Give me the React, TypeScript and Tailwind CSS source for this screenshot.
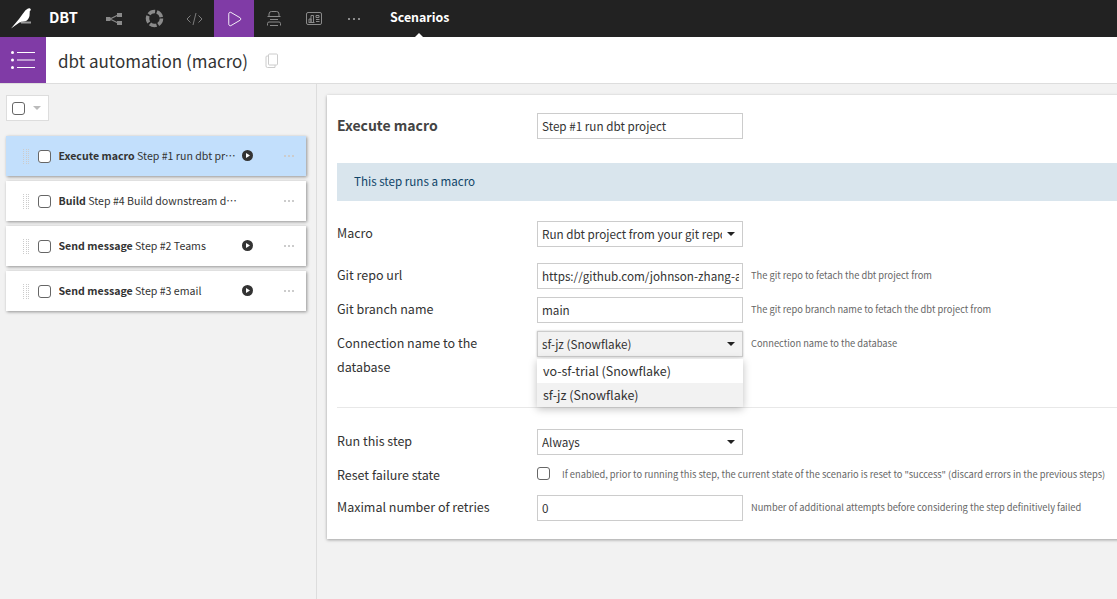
import { Play } from "lucide-react";

const font = "[font-family:'Noto_Sans_CJK_SC','Noto_Sans',sans-serif]";

function TopIcon({ children, active }: { children: React.ReactNode; active?: boolean }) {
  return (
    <div className={`flex h-[37px] w-10 items-center justify-center ${active ? "bg-[#803ba6]" : ""}`}>
      {children}
    </div>
  );
}

function Caret() {
  return <span className="block h-0 w-0 border-x-[4px] border-t-[4px] border-x-transparent border-t-[#222]" />;
}

const steps = [
  { type: "Execute macro", name: "Step #1 run dbt project", play: true, active: true },
  { type: "Build", name: "Step #4 Build downstream datasets", play: false },
  { type: "Send message", name: "Step #2 Teams", play: true },
  { type: "Send message", name: "Step #3 email", play: true },
];

function StepRow({ step }: { step: (typeof steps)[number] }) {
  return (
    <div
      className={`flex h-10 w-[300px] items-center shadow-[1px_1px_3px_rgba(0,0,0,0.4)] ${
        step.active ? "bg-[#c2dffc]" : "bg-white"
      }`}
    >
      <div className="ml-[17px] grid w-[6px] grid-cols-3 gap-x-[1.5px] gap-y-px">
        {Array.from({ length: 24 }).map((_, i) => (
          <span key={i} className="h-px w-px bg-[#ccc]" />
        ))}
      </div>
      <span className="ml-[9px] h-[13px] w-[13px] shrink-0 rounded-[3px] border border-[#666] bg-white" />
      <div className="ml-[7.5px] w-[183px] truncate text-[10.6px] leading-[16px] text-[#333]">
        <b className="font-bold">{step.type}</b> {step.name}
      </div>
      <div className="flex w-[12px] shrink-0 justify-center">
        {step.play && (
          <svg width="11" height="11" viewBox="0 0 11 11" className="-mt-px">
            <circle cx="5.5" cy="5.5" r="5.5" fill="#333" />
            <path d="M4 3l4 2.5L4 8z" fill="#fff" />
          </svg>
        )}
      </div>
      <div className="ml-[30px] flex gap-[2px]">
        <span className="h-[2px] w-[2px] bg-[#ccc]" />
        <span className="h-[2px] w-[2px] bg-[#ccc]" />
        <span className="h-[2px] w-[2px] bg-[#ccc]" />
      </div>
    </div>
  );
}

function Field({
  label,
  help,
  helpClass = "ml-2 pt-1",
  children,
  className = "",
}: {
  label: React.ReactNode;
  help?: string;
  helpClass?: string;
  children?: React.ReactNode;
  className?: string;
}) {
  return (
    <div className={`flex ${className}`}>
      <div className="w-[200px] shrink-0 text-[12.5px] leading-[24px] text-[#333]">{label}</div>
      {children}
      {help && <div className={`whitespace-nowrap text-[9.3px] leading-[16px] text-[#666] ${helpClass}`}>{help}</div>}
    </div>
  );
}

function Box({ children, select, className = "" }: { children?: React.ReactNode; select?: boolean; className?: string }) {
  return (
    <div
      className={`flex h-[26px] w-[206px] shrink-0 items-center justify-between border border-[#ccc] pl-1 text-[11.7px] leading-[24px] whitespace-nowrap text-[#333] ${
        select ? "pr-[7px]" : "pr-[3px]"
      } ${className}`}
    >
      <span className="block min-w-0 flex-1 overflow-hidden">{children}</span>
      {select && (
        <span className="ml-[5px] block shrink-0">
          <Caret />
        </span>
      )}
    </div>
  );
}

export default function App() {
  return (
    <div className={`flex h-[599px] w-[1117px] flex-col overflow-hidden bg-[#f2f2f2] ${font}`}>
      <header className="flex h-[37px] shrink-0 items-center bg-[#222]">
        <div className="flex w-[46px] justify-center">
          <svg width="22" height="22" viewBox="0 0 22 22" className="-ml-[4px] mt-[-1px]">
            <path d="M1 21.5 L9 12 L13 6.5 Q15.5 2.5 18 1.5 L20 1.2 L21 3 L19.8 4 L19.5 9 Q18.5 13 15.5 14.2 L9.5 15.5 Z" fill="#fff" />
            <rect x="11" y="14.5" width="10" height="2" fill="#999" />
          </svg>
        </div>
        <div className="w-[48px] pb-[3px] pl-[3px] text-[14.5px] leading-none font-bold text-white">DBT</div>
        <TopIcon>
          <svg width="16" height="12" viewBox="0 0 16 12" fill="#8a8a8a">
            <rect x="0" y="4" width="4.5" height="4" />
            <rect x="11" y="0" width="5" height="4" />
            <rect x="11" y="8" width="5" height="4" />
            <path d="M4 6 L12 2 M4 6 L12 10" stroke="#8a8a8a" strokeWidth="1.2" fill="none" />
          </svg>
        </TopIcon>
        <TopIcon>
          <svg width="19" height="19" viewBox="0 0 19 19" fill="none">
            <circle cx="9.5" cy="9.5" r="7" stroke="#8a8a8a" strokeWidth="3.5" strokeDasharray="7 1.8" />
          </svg>
        </TopIcon>
        <TopIcon>
          <svg width="17" height="14" viewBox="0 0 17 14" fill="none" stroke="#7d7d7d" strokeWidth="1">
            <path d="M4.5 3.5 L1 7 L4.5 10.5 M12.5 3.5 L16 7 L12.5 10.5 M10 1 L7 13" />
          </svg>
        </TopIcon>
        <TopIcon active>
          <Play size={18} strokeWidth={1.2} color="#fff" />
        </TopIcon>
        <TopIcon>
          <svg width="14" height="15" viewBox="0 0 14 15" fill="none" stroke="#8a8a8a" strokeWidth="1">
            <path d="M2 5 V3 Q2 0.5 4.5 0.5 H9.5 Q12 0.5 12 3 V5 M0.5 5.5 H13.5 M3 8.5 H11 M0.5 14.5 V12.5 Q0.5 11 2 11 H12 Q13.5 11 13.5 12.5 V14.5 M3 14.5 H11" />
          </svg>
        </TopIcon>
        <TopIcon>
          <svg width="16" height="13" viewBox="0 0 16 13" fill="none" stroke="#8a8a8a" strokeWidth="1">
            <rect x="0.5" y="0.5" width="15" height="12" rx="1.5" />
            <path d="M3 10 V7 H5 V10 M5 10 V3.5 H7.5 V10 M2.5 10.5 H8.5 M10 3.5 H13 V5.5 H10Z M10 7.5 H13.5 M10 9.5 H13.5" />
          </svg>
        </TopIcon>
        <TopIcon>
          <div className="flex gap-[3px]">
            <span className="h-[2px] w-[2px] bg-[#8a8a8a]" />
            <span className="h-[2px] w-[2px] bg-[#8a8a8a]" />
            <span className="h-[2px] w-[2px] bg-[#8a8a8a]" />
          </div>
        </TopIcon>
        <div className="relative ml-4 flex h-[37px] items-center pb-[3px] text-[12.4px] leading-none font-bold text-white">
          Scenarios
          <span className="absolute bottom-0 left-[25px] h-0 w-0 border-x-[4px] border-b-[4px] border-x-transparent border-b-white" />
        </div>
      </header>

      <div className="flex h-[47px] shrink-0 items-center border-b border-[#ddd] bg-white">
        <div className="flex h-full w-[46px] items-center justify-center bg-[#803ba6]">
          <svg width="24" height="18" viewBox="0 0 24 18" fill="#fff">
            <circle cx="1.5" cy="1.5" r="1.5" />
            <circle cx="1.5" cy="9" r="1.5" />
            <circle cx="1.5" cy="16.5" r="1.5" />
            <rect x="6" y="1" width="18" height="1" />
            <rect x="6" y="8.5" width="18" height="1" />
            <rect x="6" y="16" width="18" height="1" />
          </svg>
        </div>
        <h1 className="ml-3 pt-[2px] text-[17px] leading-[28px] font-normal text-[#333]">dbt automation (macro)</h1>
        <svg width="14" height="16" viewBox="0 0 14 16" fill="none" stroke="#ccc" className="ml-[17px] mt-px">
          <rect x="3.5" y="1" width="9" height="11" rx="1" />
          <path d="M3.5 3 H2 Q1 3 1 4 V13 Q1 14.5 2.5 14.5 H10 V12" />
        </svg>
      </div>

      <div className="flex min-h-0 flex-1">
        <aside className="w-[317px] shrink-0 border-r border-[#ddd] pl-[6px]">
          <div className="mt-[11px] flex h-[26px] w-[43px] items-center border border-[#ddd] bg-white pl-[5px]">
            <span className="h-[13px] w-[13px] rounded-[3px] border border-[#666] bg-white" />
            <span className="ml-[8px] h-0 w-0 border-x-[4px] border-t-[4px] border-x-transparent border-t-[#bbb]" />
          </div>
          <div className="mt-[15px] flex flex-col gap-[5px]">
            {steps.map((s) => (
              <StepRow key={s.name} step={s} />
            ))}
          </div>
        </aside>

        <main className="min-w-0 flex-1 pl-[10px] pt-[11px]">
          <div className="h-[444px] w-[900px] bg-white pl-[10px] pt-[18px] shadow-[0_1px_3px_rgba(0,0,0,0.35)]">
            <div className="flex items-start">
              <div className="w-[200px] text-[14px] leading-[24px] font-bold text-[#444]">Execute macro</div>
              <Box>Step #1 run dbt project</Box>
            </div>
            <div className="mt-[24px] flex h-[38px] items-center bg-[#d9e5ed] pl-[17px] text-[11.6px] text-[#0f4468]">
              This step runs a macro
            </div>
            <Field label="Macro" className="mt-5 items-start">
              <Box select>Run dbt project from your git repo</Box>
            </Field>
            <Field label="Git repo url" help="The git repo to fetach the dbt project from" className="mt-4">
              <Box>https://github.com/johnson-zhang-a</Box>
            </Field>
            <Field label="Git branch name" help="The git repo branch name to fetach the dbt project from" className="mt-2">
              <Box>main</Box>
            </Field>
            <Field
              label={
                <>
                  Connection name to the
                  <br />
                  database
                </>
              }
              help="Connection name to the database"
              className="mt-2"
            >
              <div className="relative h-[26px]">
                <Box select className="bg-[#f2f2f2] shadow-[0_0_2px_rgba(0,0,0,0.25)]">
                  sf-jz (Snowflake)
                </Box>
                <div className="absolute left-0 top-[28px] z-10 w-[206px] bg-white text-[12.5px] leading-[24px] text-[#333] shadow-[0_2px_8px_rgba(0,0,0,0.25)]">
                  <div className="pl-[6px]">vo-sf-trial (Snowflake)</div>
                  <div className="bg-[#f2f2f2] pl-[6px]">sf-jz (Snowflake)</div>
                </div>
              </div>
            </Field>
            <div className="mt-[28px] border-t border-[#e8e8e8]" />
            <Field label="Run this step" className="mt-[21px] items-start">
              <Box select>Always</Box>
            </Field>
            <Field
              label="Reset failure state"
              help='If enabled, prior to running this step, the current state of the scenario is reset to "success" (discard errors in the previous steps)'
              helpClass="ml-3 pt-[3px]"
              className="mt-2"
            >
              <span className="mt-1 h-[13px] w-[13px] shrink-0 rounded-[3px] border border-[#666] bg-white" />
            </Field>
            <Field label="Maximal number of retries" help="Number of additional attempts before considering the step definitively failed" className="mt-2">
              <Box>0</Box>
            </Field>
          </div>
        </main>
      </div>
    </div>
  );
}
